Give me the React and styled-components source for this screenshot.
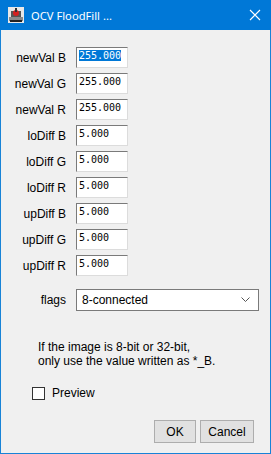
import React from "react";
import styled, { createGlobalStyle } from "styled-components";

const GlobalStyle = createGlobalStyle`
  html, body {
    margin: 0;
    padding: 0;
    background: #f0f0f0;
  }
`;

const Window = styled.div`
  box-sizing: border-box;
  width: 271px;
  height: 454px;
  border: 1px solid #1883d7;
  border-top: none;
  background: #f0f0f0;
  display: flex;
  flex-direction: column;
  font-family: "Liberation Sans", Arial, sans-serif;
  font-size: 12px;
  color: #000;
`;

const TitleBar = styled.div`
  height: 30px;
  margin: 0 -1px;
  background: #0078d7;
  display: flex;
  align-items: center;
  padding: 0 0 0 8px;
  color: #fff;
`;

const Title = styled.span`
  font-family: "Noto Sans", "Segoe UI", sans-serif;
  font-size: 11.2px;
  margin-left: 7px;
  flex: 1;
`;

const Close = styled.div`
  width: 30px;
  height: 30px;
  display: flex;
  align-items: center;
  justify-content: center;
  margin-right: 1px;
`;

const Body = styled.div`
  flex: 1;
  display: flex;
  flex-direction: column;
  padding-top: 17px;
`;

const Form = styled.div`
  display: grid;
  grid-template-columns: 65px auto;
  column-gap: 10px;
  row-gap: 5px;
  align-items: center;
`;

const Label = styled.label`
  text-align: right;
  white-space: nowrap;
`;

const Field = styled.div`
  box-sizing: border-box;
  width: 52px;
  height: 21px;
  background: #fff;
  border: 1px solid;
  border-color: #7a7a7a #dcdcdc #dcdcdc #7a7a7a;
  padding: 1px 0 0 2px;
  font-family: "DejaVu Sans Mono", "Liberation Mono", monospace;
  font-size: 10px;
  line-height: 14px;
`;

const Selected = styled.span`
  background: ${(p) => (p.$on ? "#0078d7" : "transparent")};
  color: ${(p) => (p.$on ? "#fff" : "#000")};
`;

const FlagsRow = styled.div`
  display: grid;
  grid-template-columns: 65px auto;
  column-gap: 10px;
  align-items: center;
  margin-top: 13px;
`;

const Select = styled.div`
  box-sizing: border-box;
  width: 183px;
  height: 22px;
  background: #fff;
  border: 1px solid #7a7a7a;
  display: flex;
  align-items: center;
  justify-content: space-between;
  padding: 0 8px 0 5px;
`;

const Note = styled.p`
  margin: 29px 0 0 37px;
  line-height: 14px;
`;

const CheckRow = styled.label`
  display: flex;
  align-items: center;
  gap: 7px;
  margin: 18px 0 0 31px;
`;

const Box = styled.span`
  box-sizing: border-box;
  width: 13px;
  height: 13px;
  background: #fff;
  border: 1px solid #333;
`;

const Buttons = styled.div`
  display: flex;
  justify-content: flex-end;
  gap: 4px;
  margin-top: auto;
  padding: 0 16px 10px 0;
`;

const Button = styled.button`
  box-sizing: border-box;
  height: 23px;
  min-width: ${(p) => p.$w}px;
  padding: 0 6px;
  background: #e1e1e1;
  border: 1px solid #adadad;
  font-family: "Liberation Sans", Arial, sans-serif;
  font-size: 12px;
  color: #000;
`;

const AppIcon = () => (
  <svg width="16" height="16" viewBox="0 0 16 16">
    <rect x="0" y="0" width="16" height="16" fill="#e8e8e8" />
    <rect x="1" y="10" width="14" height="4" fill="#8a8a8a" />
    <rect x="3" y="4" width="10" height="6" fill="#555" />
    <circle cx="8" cy="6" r="3" fill="#d42020" />
    <rect x="7" y="1" width="2" height="4" fill="#333" />
    <rect x="2" y="13" width="12" height="2" fill="#222" />
  </svg>
);

const rows = [
  ["newVal B", "255.000"],
  ["newVal G", "255.000"],
  ["newVal R", "255.000"],
  ["loDiff B", "5.000"],
  ["loDiff G", "5.000"],
  ["loDiff R", "5.000"],
  ["upDiff B", "5.000"],
  ["upDiff G", "5.000"],
  ["upDiff R", "5.000"],
];

const App = () => (
  <Window>
    <GlobalStyle />
    <TitleBar>
      <AppIcon />
      <Title>OCV FloodFill ...</Title>
      <Close>
        <svg width="12" height="12" viewBox="0 0 12 12">
          <path d="M1 1 L11 11 M11 1 L1 11" stroke="#fff" strokeWidth="1.1" />
        </svg>
      </Close>
    </TitleBar>
    <Body>
      <Form>
        {rows.map(([label, value], i) => (
          <React.Fragment key={label}>
            <Label>{label}</Label>
            <Field>
              <Selected $on={i === 0}>{value}</Selected>
            </Field>
          </React.Fragment>
        ))}
      </Form>
      <FlagsRow>
        <Label>flags</Label>
        <Select>
          <span>8-connected</span>
          <svg width="9" height="6" viewBox="0 0 9 6">
            <path d="M0.5 0.5 L4.5 4.5 L8.5 0.5" fill="none" stroke="#555" />
          </svg>
        </Select>
      </FlagsRow>
      <Note>
        If the image is 8-bit or 32-bit,
        <br />
        only use the value written as *_B.
      </Note>
      <CheckRow>
        <Box />
        Preview
      </CheckRow>
      <Buttons>
        <Button $w={42}>OK</Button>
        <Button $w={54}>Cancel</Button>
      </Buttons>
    </Body>
  </Window>
);

export default App;
